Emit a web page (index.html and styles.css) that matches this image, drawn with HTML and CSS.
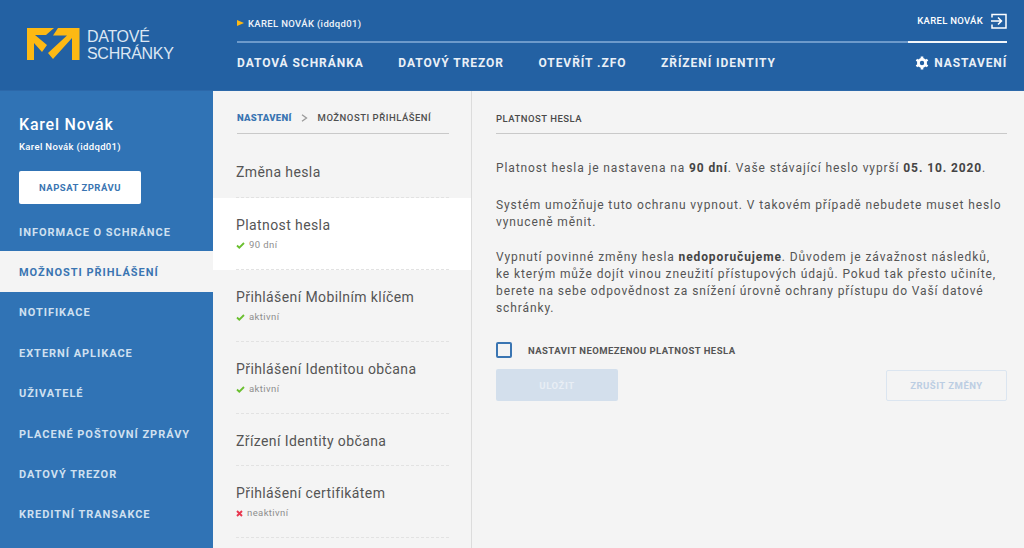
FILE: index.html
```html
<!DOCTYPE html>
<html lang="cs">
<head>
<meta charset="utf-8">
<title>Datové schránky</title>
<link rel="stylesheet" href="styles.css">
</head>
<body>
<header class="header">
  <div class="brand">
    <svg class="logo" width="53" height="32" viewBox="0 0 53 32"><path fill="#fdb913" d="M0 0H27L19 7H8L20 17L15 24L7 15V32H0ZM31 0H52.500V32H45V10L26 31L21 25L40 7.500H26Z"/></svg>
    <div class="brand-text">DATOVÉ<br>SCHRÁNKY</div>
  </div>
  <div class="head-main">
    <div class="head-top">
      <div class="account"><span class="arrow"></span>KAREL NOVÁK (iddqd01)</div>
      <div class="user">KAREL NOVÁK
        <svg width="16" height="16" viewBox="0 0 16 16" fill="none" stroke="#fff" stroke-width="1.500"><path d="M1 4.500V1.500H15V15H1V11.500"/><path d="M0 8H10M7 4.500L10.500 8L7 11.500"/></svg>
      </div>
    </div>
    <nav class="head-nav">
      <a>DATOVÁ SCHRÁNKA</a><a>DATOVÝ TREZOR</a><a>OTEVŘÍT .ZFO</a><a>ZŘÍZENÍ IDENTITY</a>
      <a class="settings"><svg width="14" height="14" viewBox="0 0 14 14" fill="none" stroke="#fff"><circle cx="7" cy="7" r="3.600" stroke-width="2.800"/><path stroke-width="2.600" d="M7 .5V3M7 11V13.500M12.600 3.750L10.500 5M1.400 10.250L3.500 9M1.400 3.750L3.500 5M12.600 10.250L10.500 9"/></svg>NASTAVENÍ</a>
    </nav>
  </div>
</header>
<div class="body">
  <aside class="side">
    <div class="profile">
      <div class="name">Karel Novák</div>
      <div class="sub">Karel Novák (iddqd01)</div>
      <button class="write">NAPSAT ZPRÁVU</button>
    </div>
    <ul class="menu">
      <li>INFORMACE O SCHRÁNCE</li>
      <li class="on">MOŽNOSTI PŘIHLÁŠENÍ</li>
      <li>NOTIFIKACE</li>
      <li>EXTERNÍ APLIKACE</li>
      <li>UŽIVATELÉ</li>
      <li>PLACENÉ POŠTOVNÍ ZPRÁVY</li>
      <li>DATOVÝ TREZOR</li>
      <li>KREDITNÍ TRANSAKCE</li>
    </ul>
  </aside>
  <section class="options">
    <div class="crumbs"><b>NASTAVENÍ</b><svg width="7" height="8" viewBox="0 0 7 8" fill="none" stroke="#999" stroke-width="1.300"><path d="M1 .8L5.500 4L1 7.200"/></svg><span>MOŽNOSTI PŘIHLÁŠENÍ</span></div>
    <div class="opt plain first">Změna hesla</div>
    <div class="opt on">Platnost hesla<small><svg class="ok" width="9" height="7" viewBox="0 0 9 7"><path d="M1 3.500L3.300 5.700L8 1" fill="none" stroke="#6abf2e" stroke-width="1.800"/></svg>90 dní</small></div>
    <div class="opt">Přihlášení Mobilním klíčem<small><svg class="ok" width="9" height="7" viewBox="0 0 9 7"><path d="M1 3.500L3.300 5.700L8 1" fill="none" stroke="#6abf2e" stroke-width="1.800"/></svg>aktivní</small></div>
    <div class="opt">Přihlášení Identitou občana<small><svg class="ok" width="9" height="7" viewBox="0 0 9 7"><path d="M1 3.500L3.300 5.700L8 1" fill="none" stroke="#6abf2e" stroke-width="1.800"/></svg>aktivní</small></div>
    <div class="opt plain">Zřízení Identity občana</div>
    <div class="opt">Přihlášení certifikátem<small><svg class="no" width="7" height="7" viewBox="0 0 7 7"><path d="M1 1L6 6M6 1L1 6" fill="none" stroke="#e8374f" stroke-width="1.900"/></svg>neaktivní</small></div>
  </section>
  <main class="detail">
    <h2>PLATNOST HESLA</h2>
    <p class="lead">Platnost hesla je nastavena na <b>90 dní</b>. Vaše stávající heslo vyprší <b>05. 10. 2020</b>.</p>
    <p>Systém umožňuje tuto ochranu vypnout. V takovém případě nebudete muset heslo<br>vynuceně měnit.</p>
    <p>Vypnutí povinné změny hesla <b>nedoporučujeme</b>. Důvodem je závažnost následků,<br>ke kterým může dojít vinou zneužití přístupových údajů. Pokud tak přesto učiníte,<br>berete na sebe odpovědnost za snížení úrovně ochrany přístupu do Vaší datové<br>schránky.</p>
    <label class="check"><span class="box"></span>NASTAVIT NEOMEZENOU PLATNOST HESLA</label>
    <div class="actions">
      <button class="save">ULOŽIT</button>
      <button class="cancel">ZRUŠIT ZMĚNY</button>
    </div>
  </main>
</div>
</body>
</html>
```
FILE: styles.css
```css
* { box-sizing: border-box; }
html, body { margin: 0; height: 100%; overflow: hidden; }
body { font-family: Roboto, "Liberation Sans", sans-serif; background: #f4f4f4; color: #4a4a4a; width: 1024px; height: 548px; }
button { font-family: inherit; cursor: pointer; }
ul { list-style: none; margin: 0; padding: 0; }

.header { height: 91px; background: #2361a3; border-bottom: 1px solid #2c68a9; display: flex; color: #fff; }
.brand { width: 237px; padding: 28px 0 0 27px; display: flex; gap: 7px; flex: none; }
.brand-text { font-family: "Liberation Sans", sans-serif; font-size: 16px; line-height: 17px; color: #dce7f3; letter-spacing: -.3px; }
.head-main { flex: 1; padding-right: 17px; }
.head-top { height: 43px; border-bottom: 2px solid #6d9acb; display: flex; justify-content: space-between; align-items: center; padding-top: 5px; }
.account { font-size: 9.500px; font-weight: 500; letter-spacing: .35px; color: #eef3f9; display: flex; align-items: center; }
.arrow { width: 0; height: 0; border-left: 7px solid #fdb913; border-top: 3px solid transparent; border-bottom: 3px solid transparent; margin-right: 4px; }
.user { font-size: 9.500px; font-weight: 500; letter-spacing: .3px; width: 99px; height: 36px; margin-bottom: -2px; border-bottom: 2px solid #f2f6fa; display: flex; align-items: center; justify-content: flex-end; gap: 8px; padding: 0 0 7px 9px; white-space: nowrap; align-self: flex-end; }
.head-nav { display: flex; align-items: center; height: 40px; font-size: 12px; font-weight: 700; letter-spacing: .95px; color: #eaf0f7; }
.head-nav a { margin-right: 34.500px; white-space: nowrap; }
.head-nav .settings { margin: 0 0 0 auto; display: flex; align-items: center; gap: 5px; letter-spacing: .85px; }

.body { display: flex; height: 457px; }
.side { width: 213px; flex: none; background: #3073b5; color: #fff; }
.profile { padding: 24px 0 0 19px; height: 120px; }
.name { font-size: 16px; font-weight: 500; letter-spacing: .78px; line-height: 20px; }
.sub { font-size: 9.500px; font-weight: 500; letter-spacing: .35px; margin-top: 6px; line-height: 12px; }
.write { display: block; width: 122px; height: 33px; margin-top: 18px; background: #fff; border: 0; border-radius: 2px; color: #3a75b2; font-size: 9.500px; font-weight: 700; letter-spacing: .5px; }
.menu li { height: 40.400px; padding: 2px 0 0 19px; display: flex; align-items: center; font-size: 11px; font-weight: 700; letter-spacing: .97px; color: #cfe0f0; white-space: nowrap; }
.menu li.on { background: #f4f4f4; color: #3a75b2; padding-top: 1px; }

.options { width: 259px; flex: none; border-right: 1px solid #dcdcdc; }
.crumbs { margin: 0 22px 0 24px; height: 43px; padding-top: 11px; border-bottom: 1px solid #c9c9c9; display: flex; align-items: center; font-size: 9.500px; font-weight: 700; letter-spacing: .3px; }
.crumbs b { color: #3a75b2; }
.crumbs svg { margin: 0 10px 0 9px; }
.crumbs span { color: #4f4f4f; font-weight: 500; letter-spacing: .52px; }
.opt { height: 72px; padding: 18px 22px 0 23px; font-size: 14px; line-height: 18px; letter-spacing: .4px; color: #555; position: relative; white-space: nowrap; }
.opt::after { content: ""; position: absolute; left: 23px; right: 22px; bottom: 0; border-bottom: 1px dashed #e2e2e2; }
.opt.plain { height: 52px; }
.opt.first { height: 64px; padding-top: 29px; }
.opt.on { background: #fff; }
.opt small { display: flex; align-items: center; font-size: 9.500px; letter-spacing: .4px; color: #8e8e8e; line-height: 12px; margin-top: 5px; }
.opt small .ok { margin-right: 4px; }
.opt small .no { margin-right: 4px; }

.detail { flex: 1; padding: 0 17px 0 24px; min-width: 0; }
.detail h2 { margin: 0 0 26px; height: 43px; padding-top: 22px; border-bottom: 1px solid #c9c9c9; font-size: 9.500px; line-height: 12px; font-weight: 500; letter-spacing: .5px; color: #4a4a4a; }
.detail p { margin: 0 0 18px; font-size: 12px; line-height: 17px; letter-spacing: .89px; color: #555; white-space: nowrap; }
.detail .lead { margin-bottom: 20px; }
.detail p b { color: #444; }
.check { display: flex; align-items: center; gap: 16px; margin-top: 25px; font-size: 9.500px; font-weight: 700; letter-spacing: .45px; color: #555; }
.box { width: 16px; height: 16px; border: 2px solid #3a75b2; border-radius: 2px; flex: none; }
.actions { display: flex; justify-content: space-between; align-items: flex-end; margin-top: 11px; }
.save { width: 122px; height: 32px; background: #d3dfec; border: 0; border-radius: 2px; color: #e8eef5; font-size: 9.500px; font-weight: 700; letter-spacing: .6px; }
.cancel { width: 121px; height: 31px; background: transparent; border: 1px solid #dbe5f0; border-radius: 2px; color: #bccee3; font-size: 9.500px; font-weight: 700; letter-spacing: .5px; }
```
